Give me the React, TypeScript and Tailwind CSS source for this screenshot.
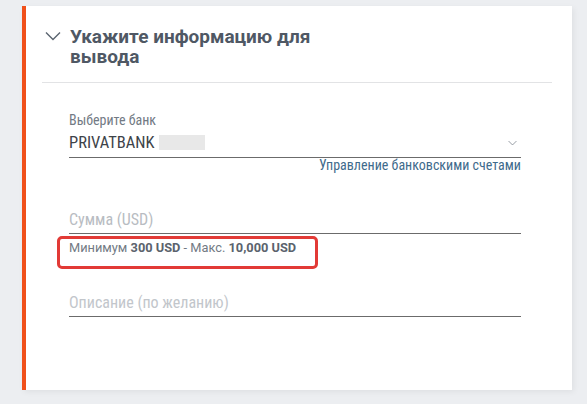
import React from "react";

const Chevron = ({ className }: { className?: string }) => (
  <svg viewBox="0 0 16 10" className={className} fill="none" stroke="currentColor" strokeWidth={1.4}>
    <path d="M1 1.5l7 7 7-7" />
  </svg>
);

const condensed = "font-['Roboto_Condensed','Liberation_Sans_Narrow','DejaVu_Sans_Condensed',Roboto,sans-serif]";

const App = () => {
  return (
    <div className="w-[587px] h-[404px] bg-[#eceef1] pt-[6px] pl-[22px] font-[Roboto,sans-serif]">
      <div className="relative w-[550px] h-[384px] bg-white border-l-4 border-[#f0501a] shadow-[2px_2px_6px_rgba(0,0,0,0.06)]">
        <div className="flex items-start pl-[19px] pt-[21px]">
          <Chevron className="w-[16px] h-[10px] mt-[4px] text-[#5b6570]" />
          <h2 className="ml-[9px] w-[270px] text-[19px] leading-[20px] font-bold text-[#4f5864]">
            Укажите информацию для вывода
          </h2>
        </div>
        <div className="mt-[15px] ml-[16px] mr-[20px] h-px bg-[#e2e3e5]" />

        <div className={`ml-[43px] mr-[51px] ${condensed}`}>
          <div className="mt-[29px]">
            <div className="text-[14px] leading-[16px] text-[#727a84]">Выберите банк</div>
            <div className="flex items-center justify-between h-[30px] border-b border-[#6b6b6b]">
              <div className="flex items-center">
                <span className="text-[16.5px] leading-[28px] text-[#3e4349]">PRIVATBANK</span>
                <span className="ml-[5px] w-[46px] h-[15px] bg-[#e8e8e8]" />
              </div>
              <Chevron className="w-[9px] h-[6px] mr-[4px] text-[#7a828c]" />
            </div>
            <div className="text-right text-[14px] leading-[15px] text-[#3f6b8c]">
              Управление банковскими счетами
            </div>
          </div>

          <div className="mt-[35px]">
            <div className="h-[26px] border-b border-[#6b6b6b] text-[16px] leading-[24px] text-[#b8bcc2]">
              Сумма (USD)
            </div>
            <div className="mt-[6px] text-[12.8px] leading-[16px] text-[#727a84] font-[Roboto,sans-serif]">
              Минимум <b className="text-[#5b636d]">300 USD</b> - Макс. <b className="text-[#5b636d]">10,000 USD</b>
            </div>
          </div>

          <div className="mt-[35px]">
            <div className="h-[26px] border-b border-[#6b6b6b] text-[16px] leading-[24px] text-[#c2c6cb]">
              Описание (по желанию)
            </div>
          </div>
        </div>

        <div className="absolute left-[31px] top-[230px] w-[261px] h-[33px] border-[3px] border-[#e23a36] rounded-[5px]" />
      </div>
    </div>
  );
};

export default App;
